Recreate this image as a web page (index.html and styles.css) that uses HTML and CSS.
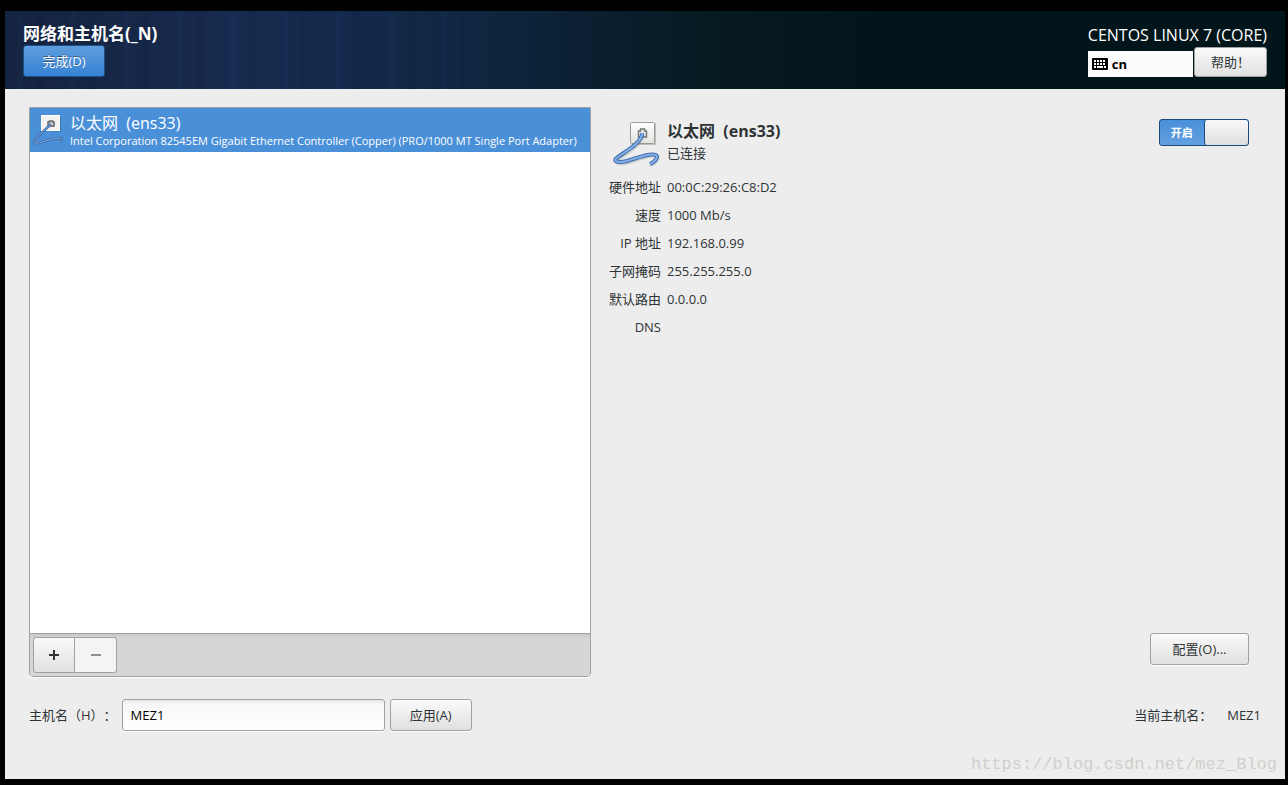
FILE: index.html
```html
<!DOCTYPE html>
<html lang="zh-CN">

<head>
    <meta charset="UTF-8">
    <meta name="viewport" content="width=device-width, initial-scale=1.0">
    <title>网络和主机名</title>
    <link rel="stylesheet" href="styles.css">
</head>

<body>
    <div class="window">
        <header class="header">
            <div class="header-left">
                <h1 class="title">网络和主机名(_N)</h1>
                <button class="button done" type="button">完成(D)</button>
            </div>
            <div class="header-right">
                <div class="product">CENTOS LINUX 7 (CORE)</div>
                <div class="header-tools">
                    <button class="keyboard" type="button">
                        <svg width="16" height="12" viewBox="0 0 16 12" aria-hidden="true">
                            <rect width="16" height="12" rx="1" fill="#000" />
                            <path d="M2 3h12M2 6h12" stroke="#fff" stroke-width="2" stroke-dasharray="2 1" />
                            <path d="M2 9h2M5 9h6M12 9h2" stroke="#fff" stroke-width="2" />
                        </svg>
                        <span>cn</span>
                    </button>
                    <button class="button help" type="button">帮助！</button>
                </div>
            </div>
        </header>

        <main class="content">
            <div class="panes">
                <!-- 左侧设备列表 -->
                <section class="devices">
                    <ul class="device-list">
                        <li>
                            <button class="device" type="button">
                                <svg class="device-icon" width="32" height="32" viewBox="0 0 32 32" aria-hidden="true">
                                    <rect x="9" y="3.500" width="19" height="15" fill="#000" opacity=".2" />
                                    <rect x="8.500" y="2.500" width="18" height="15" fill="#f2f2f0" stroke="#fff" />
                                    <path d="M15 13V9h1.500V8h3v1H21v4z" fill="#ddd" stroke="#666" stroke-width="1.500" />
                                    <path d="M18 11C13 16 6 22 1.500 27.500 0 31 4 30.500 9 29c7-2 13-4 18-4 3 .5 2 2-1 4" fill="none" stroke="#3a6aa8" stroke-width="2.500" />
                                    <path d="M18 11C13 16 6 22 1.500 27.500 0 31 4 30.500 9 29c7-2 13-4 18-4 3 .5 2 2-1 4" fill="none" stroke="#7fabdf" />
                                </svg>
                                <span class="device-text">
                                    <span class="device-name">以太网&nbsp; (ens33)</span>
                                    <span class="device-desc">Intel Corporation 82545EM Gigabit Ethernet Controller (Copper) (PRO/1000 MT Single Port Adapter)</span>
                                </span>
                            </button>
                        </li>
                    </ul>
                    <div class="toolbar">
                        <button class="tool" type="button" aria-label="添加">
                            <svg width="12" height="12" viewBox="0 0 12 12"><path d="M1 6h10M6 1v10" stroke="#2e3436" stroke-width="2" /></svg>
                        </button>
                        <button class="tool" type="button" aria-label="删除" disabled>
                            <svg width="12" height="12" viewBox="0 0 12 12"><path d="M1 6h10" stroke="#8d9091" stroke-width="2" /></svg>
                        </button>
                    </div>
                </section>

                <!-- 右侧设备详情 -->
                <section class="details">
                    <div class="details-head">
                        <svg class="details-icon" width="48" height="48" viewBox="0 0 48 48" aria-hidden="true">
                            <defs>
                                <linearGradient id="plate" x1="0" y1="0" x2="0" y2="1">
                                    <stop offset="0" stop-color="#ffffff" />
                                    <stop offset="1" stop-color="#e2e2df" />
                                </linearGradient>
                            </defs>
                            <rect x="18" y="4" width="25" height="22" rx="1" fill="#000" opacity=".2" />
                            <rect x="17.500" y="3.500" width="24" height="21" rx="1" fill="url(#plate)" stroke="#999b96" />
                            <path d="M25.500 18v-6h2v-2h4v2h2v6z" fill="#eee" stroke="#777974" stroke-width="1.500" />
                            <path d="M30 17C27 27 12 35 4 41c-3 4 4 4 11 2.500 10-3 20-7 25-7 8 0 4 7-3 10" fill="none" stroke="#000" stroke-width="4" opacity=".12" />
                            <path d="M29.500 14C28 25 11 33 3 39.500c-3 4 4 4 11 2.500 10-3 20-7 26-6.500 7 0 4 6-3 9.500" fill="none" stroke="#3b6caf" stroke-width="4" />
                            <path d="M29.500 14C28 25 11 33 3 39.500c-3 4 4 4 11 2.500 10-3 20-7 26-6.500 7 0 4 6-3 9.500" fill="none" stroke="#86b1e6" stroke-width="2" />
                        </svg>
                        <div class="details-name">
                            <h2>以太网&nbsp; (ens33)</h2>
                            <p>已连接</p>
                        </div>
                        <label class="switch">
                            <input type="checkbox" aria-label="启用以太网" checked>
                            <span class="switch-on">开启</span>
                            <span class="switch-thumb"></span>
                        </label>
                    </div>
                    <dl class="info">
                        <dt>硬件地址</dt>
                        <dd>00:0C:29:26:C8:D2</dd>
                        <dt>速度</dt>
                        <dd>1000 Mb/s</dd>
                        <dt>IP 地址</dt>
                        <dd>192.168.0.99</dd>
                        <dt>子网掩码</dt>
                        <dd>255.255.255.0</dd>
                        <dt>默认路由</dt>
                        <dd>0.0.0.0</dd>
                        <dt>DNS</dt>
                        <dd></dd>
                    </dl>
                    <button class="button configure" type="button">配置(O)...</button>
                </section>
            </div>

            <!-- 主机名设置 -->
            <form class="hostname">
                <label for="hostname">主机名（H）：</label>
                <input class="hostname-input" id="hostname" type="text" value="MEZ1">
                <button class="button" type="button">应用(A)</button>
                <div class="current">
                    <span>当前主机名：</span>
                    <span>MEZ1</span>
                </div>
            </form>
        </main>

        <div class="watermark">https://blog.csdn.net/mez_Blog</div>
    </div>
</body>

</html>
```
FILE: styles.css
```css
* {
    box-sizing: border-box;
}

body {
    display: flex;
    min-height: 100vh;
    margin: 0;
    padding: 11px 3px 6px 5px;
    background-color: #000;
    color: #2e3436;
    font-family: "Open Sans", "Noto Sans CJK SC", sans-serif;
    font-size: 13px;
    line-height: 20px;
    /* 全角标点保持完整宽度 */
    text-spacing-trim: space-all;
}

h1,
h2,
p,
ul,
dl,
dd {
    margin: 0;
    padding: 0;
}

button,
input {
    font: inherit;
    color: inherit;
}

.window {
    position: relative;
    display: flex;
    flex: 1;
    flex-direction: column;
    min-width: 0;
    background-color: #ededed;
}

/* 顶部横幅 */
.header {
    display: flex;
    justify-content: space-between;
    padding: 12px 18px;
    color: #fff;
    background:
        repeating-linear-gradient(to right, transparent 0 11px, rgba(50, 90, 160, 0.06) 14px 17px, transparent 19px 29px, rgba(0, 10, 30, 0.08) 33px 36px, transparent 41px 53px) left / 36% 100% no-repeat,
        linear-gradient(to right, #14233f, #172b4f 18%, #12294b 27%, #102742 36%, #0a1f30 46%, #06191f 57%, #02151a 68%);
}

.title {
    font-size: 17px;
    line-height: 22px;
}

.button {
    min-width: 82px;
    height: 32px;
    padding: 0 15px;
    border: 1px solid #a1a1a1;
    border-radius: 3px;
    background: linear-gradient(#fafafa, #e0e0e0);
    box-shadow: 0 1px #fff;
    color: #2e3436;
    white-space: nowrap;
}

.done {
    display: block;
    border-color: #1c5187;
    background: linear-gradient(#5f9ddd, #3583d5);
    box-shadow: none;
    color: #fff;
    text-shadow: 0 -1px rgba(0, 0, 0, 0.4);
}

.product {
    font-size: 16px;
    line-height: 24px;
}

.header-tools {
    display: flex;
    align-items: flex-end;
    gap: 1px;
}

.keyboard {
    display: flex;
    flex: 1;
    align-items: center;
    gap: 4px;
    height: 26px;
    padding: 0 4px;
    border: 0;
    background-color: #fcfcfc;
    color: #000;
    font-weight: bold;
}

.help {
    min-width: 73px;
    height: 30px;
    box-shadow: none;
}

.content {
    display: flex;
    flex: 1;
    flex-direction: column;
    gap: 22px;
    padding: 18px 24px 48px;
}

.panes {
    display: grid;
    flex: 1;
    grid-template-columns: 562fr 670fr;
}

/* 设备列表 */
.devices {
    display: flex;
    flex-direction: column;
    border: 1px solid #a1a1a1;
    border-radius: 0 0 4px 4px;
    background-color: #fff;
    box-shadow: 0 1px #fff;
}

.device-list {
    flex: 1;
    list-style: none;
}

.device {
    display: flex;
    gap: 5px;
    width: 100%;
    height: 44px;
    padding: 5px 3px;
    border: 0;
    background-color: #4a90d9;
    color: #fff;
    text-align: left;
}

.device-icon {
    flex: none;
}

.device-text {
    display: flex;
    flex-direction: column;
}

.device-name {
    font-size: 16px;
}

.device-desc {
    font-size: 11px;
    line-height: 16px;
}

.toolbar {
    display: flex;
    padding: 3px;
    border-top: 1px solid #a1a1a1;
    border-radius: 0 0 3px 3px;
    background: linear-gradient(#c8c8c8, #d6d6d6 4px);
}

.tool {
    display: flex;
    align-items: center;
    justify-content: center;
    width: 42px;
    height: 36px;
    padding: 0;
    border: 1px solid #a1a1a1;
    border-radius: 3px 0 0 3px;
    background: linear-gradient(#fafafa, #e0e0e0);
}

.tool + .tool {
    border-left: 0;
    border-radius: 0 3px 3px 0;
    background: #f4f4f4;
}

/* 设备详情 */
.details {
    display: flex;
    flex-direction: column;
    padding: 12px 12px 12px 17px;
}

.details-head {
    display: flex;
    gap: 6px;
}

.details-icon {
    margin-left: 5px;
}

.details-name {
    flex: 1;
}

.details-name h2 {
    font-size: 16px;
    line-height: 24px;
}

.switch {
    position: relative;
    display: flex;
    width: 90px;
    height: 27px;
    border: 1px solid #1c4a7c;
    border-radius: 3px;
    background: linear-gradient(#4a90d9, #62a0e0);
    color: #fff;
    font-size: 11px;
    font-weight: bold;
    line-height: 25px;
    text-align: center;
}

/* 复选框透明覆盖在开关上 */
.switch input {
    position: absolute;
    inset: 0;
    width: 100%;
    height: 100%;
    margin: 0;
    opacity: 0;
}

.switch-on {
    flex: 1;
}

.switch-thumb {
    flex: 1;
    border-left: 1px solid #1c4a7c;
    border-radius: 3px;
    background: linear-gradient(#f8f8f8, #dedede);
}

.info {
    display: grid;
    grid-template-columns: 53px 1fr;
    gap: 8px 6px;
    padding-top: 10px;
}

.info dt {
    text-align: right;
    white-space: nowrap;
}

.configure {
    align-self: flex-end;
    min-width: 99px;
    margin-top: auto;
}

/* 底部主机名 */
.hostname {
    display: flex;
    align-items: center;
    gap: 5px;
}

.hostname-input {
    width: 263px;
    height: 32px;
    padding: 0 8px;
    border: 1px solid #a1a1a1;
    border-radius: 3px;
    background: linear-gradient(#e8e8e8, #f7f7f7 4px, #fff);
    box-shadow: 0 1px #fff;
    color: #000;
}

.current {
    display: flex;
    gap: 15px;
    margin-left: auto;
}

.watermark {
    position: absolute;
    right: 8px;
    bottom: 4px;
    color: #d0d0cc;
    font-family: "Liberation Mono", monospace;
    font-size: 17px;
}
```
